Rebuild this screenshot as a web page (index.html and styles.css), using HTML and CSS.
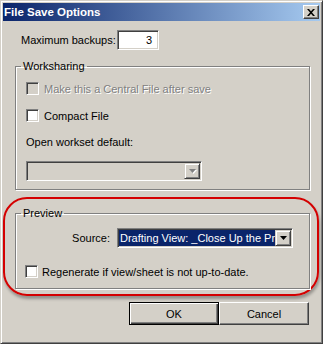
FILE: index.html
```html
<!DOCTYPE html>
<html lang="en">
<head>
    <meta charset="UTF-8">
    <title>File Save Options</title>
    <link rel="stylesheet" href="styles.css">
</head>
<body>
    <div class="window">
        <div class="titlebar">
            <span class="title">File Save Options</span>
            <span class="close-btn">
                <svg width="8" height="7" viewBox="0 0 8 7"><path d="M0 0h2l2 2.3L6 0h2L5 3.5 8 7H6L4 4.7 2 7H0l3-3.5z" fill="#000"/></svg>
            </span>
        </div>
        <div class="content">
            <div class="backups">
                <label>Maximum backups:</label>
                <div class="textbox">3</div>
            </div>

            <fieldset class="group">
                <legend>Worksharing</legend>
                <div class="check disabled"><span class="box"></span>Make this a Central File after save</div>
                <div class="check"><span class="box"></span>Compact File</div>
                <div class="field-label">Open workset default:</div>
                <div class="combo disabled">
                    <div class="combo-value"></div>
                    <span class="combo-btn"><svg width="7" height="4" viewBox="0 0 7 4"><path d="M0 0h7L3.5 4z" fill="#808080"/></svg></span>
                </div>
            </fieldset>

            <div class="highlight">
                <fieldset class="group preview">
                    <legend>Preview</legend>
                    <div class="source-row">
                        <label>Source:</label>
                        <div class="combo">
                            <div class="combo-value selected">Drafting View: _Close Up the Project</div>
                            <span class="combo-btn"><svg width="7" height="4" viewBox="0 0 7 4"><path d="M0 0h7L3.5 4z" fill="#000"/></svg></span>
                        </div>
                    </div>
                    <div class="check regen"><span class="box"></span>Regenerate if view/sheet is not up-to-date.</div>
                </fieldset>
            </div>

            <div class="buttons">
                <button class="btn default">OK</button>
                <button class="btn">Cancel</button>
            </div>
        </div>
    </div>
</body>
</html>
```

FILE: styles.css
```css
body {
    margin: 0;
    font-family: "Liberation Sans", Arial, sans-serif;
    font-size: 11px;
    color: #000;
    background: #d4d0c8;
}

.window {
    width: 323px;
    height: 344px;
    box-sizing: border-box;
    background: #d4d0c8;
    border: 1px solid;
    border-color: #d4d0c8 #404040 #404040 #d4d0c8;
    box-shadow: inset 1px 1px #fff, inset -1px -1px #808080;
    padding: 2px;
    display: flex;
    flex-direction: column;
}

.titlebar {
    height: 18px;
    background: linear-gradient(to right, #0a246a, #a6caf0);
    display: flex;
    align-items: center;
    justify-content: space-between;
    padding: 0 1px 0 1px;
}

.title {
    color: #fff;
    font-weight: bold;
    font-size: 11.5px;
}

.close-btn {
    width: 16px;
    height: 14px;
    box-sizing: border-box;
    background: #d4d0c8;
    border: 1px solid;
    border-color: #fff #404040 #404040 #fff;
    box-shadow: inset -1px -1px #808080;
    display: flex;
    align-items: center;
    justify-content: center;
}

.content {
    flex: 1;
    padding: 9px 0 0 12px;
    display: flex;
    flex-direction: column;
}

.backups {
    display: flex;
    align-items: center;
    height: 20px;
}

.backups label {
    width: 96px;
    margin-left: 6px;
}

.textbox {
    width: 42px;
    height: 20px;
    box-sizing: border-box;
    background: #fff;
    border: 1px solid;
    border-color: #808080 #fff #fff #808080;
    box-shadow: inset 1px 1px #404040, inset -1px -1px #d4d0c8;
    text-align: right;
    padding-right: 6px;
    line-height: 18px;
}

.group {
    width: 295px;
    min-width: 0;
    box-sizing: border-box;
    margin: 10px 0 0 0;
    padding: 9px 0 8px 10px;
    border: 1px solid #808080;
    box-shadow: inset 1px 1px #fff, 1px 1px #fff;
}

.group legend {
    line-height: 13px;
    padding: 0 2px;
    margin-left: -5px;
}

.check {
    display: flex;
    align-items: center;
    height: 13px;
    gap: 5px;
    white-space: nowrap;
}

.check + .check {
    margin-top: 14px;
}

.box {
    width: 13px;
    height: 13px;
    box-sizing: border-box;
    background: #fff;
    border: 1px solid;
    border-color: #808080 #fff #fff #808080;
    box-shadow: inset 1px 1px #404040, inset -1px -1px #d4d0c8;
    flex-shrink: 0;
}

.check.disabled {
    color: #808080;
    text-shadow: 1px 1px #fff;
}

.check.disabled .box {
    background: #d4d0c8;
}

.field-label {
    margin-top: 14px;
    line-height: 13px;
}

.combo {
    display: flex;
    width: 176px;
    height: 20px;
    box-sizing: border-box;
    background: #fff;
    border: 1px solid;
    border-color: #808080 #fff #fff #808080;
    box-shadow: inset 1px 1px #404040, inset -1px -1px #d4d0c8;
    padding: 1px;
}

.group > .combo {
    margin-top: 12px;
}

.combo.disabled {
    background: #d4d0c8;
}

.combo-value {
    flex: 1;
    overflow: hidden;
    white-space: nowrap;
    line-height: 16px;
    padding-left: 1px;
}

.combo-value.selected {
    background: #0a246a;
    color: #fff;
}

.combo-btn {
    width: 16px;
    height: 16px;
    box-sizing: border-box;
    background: #d4d0c8;
    border: 1px solid;
    border-color: #d4d0c8 #404040 #404040 #d4d0c8;
    box-shadow: inset 1px 1px #fff, inset -1px -1px #808080;
    display: flex;
    align-items: center;
    justify-content: center;
}

.combo.disabled .combo-btn svg {
    filter: drop-shadow(1px 1px 0 #fff);
}

.highlight {
    width: 316px;
    box-sizing: border-box;
    margin: 7px 0 0 -12px;
    padding: 8px 0 5px 10px;
    border: 2px solid #d40000;
    border-radius: 24px;
    box-shadow: 1px 3px 3px rgba(0, 0, 0, 0.3);
}

.highlight .group {
    margin-top: 0;
    padding: 8px 0 10px 10px;
}

.source-row {
    display: flex;
    align-items: center;
}

.source-row label {
    width: 91px;
    box-sizing: border-box;
    text-align: right;
    padding-right: 7px;
}

.regen {
    margin-top: 17px;
    margin-left: -1px;
    gap: 4px;
}

.buttons {
    display: flex;
    justify-content: flex-end;
    width: 295px;
    margin-top: 6px;
    padding-right: 1px;
    box-sizing: border-box;
}

.btn {
    width: 90px;
    height: 23px;
    box-sizing: border-box;
    font-family: inherit;
    font-size: 11px;
    color: #000;
    background: #d4d0c8;
    border: 1px solid;
    border-color: #fff #404040 #404040 #fff;
    box-shadow: inset -1px -1px #808080;
    padding: 0;
}

.btn.default {
    border: 1px solid #000;
    box-shadow: inset 1px 1px #fff, inset -1px -1px #404040, inset -2px -2px #808080;
}
```
